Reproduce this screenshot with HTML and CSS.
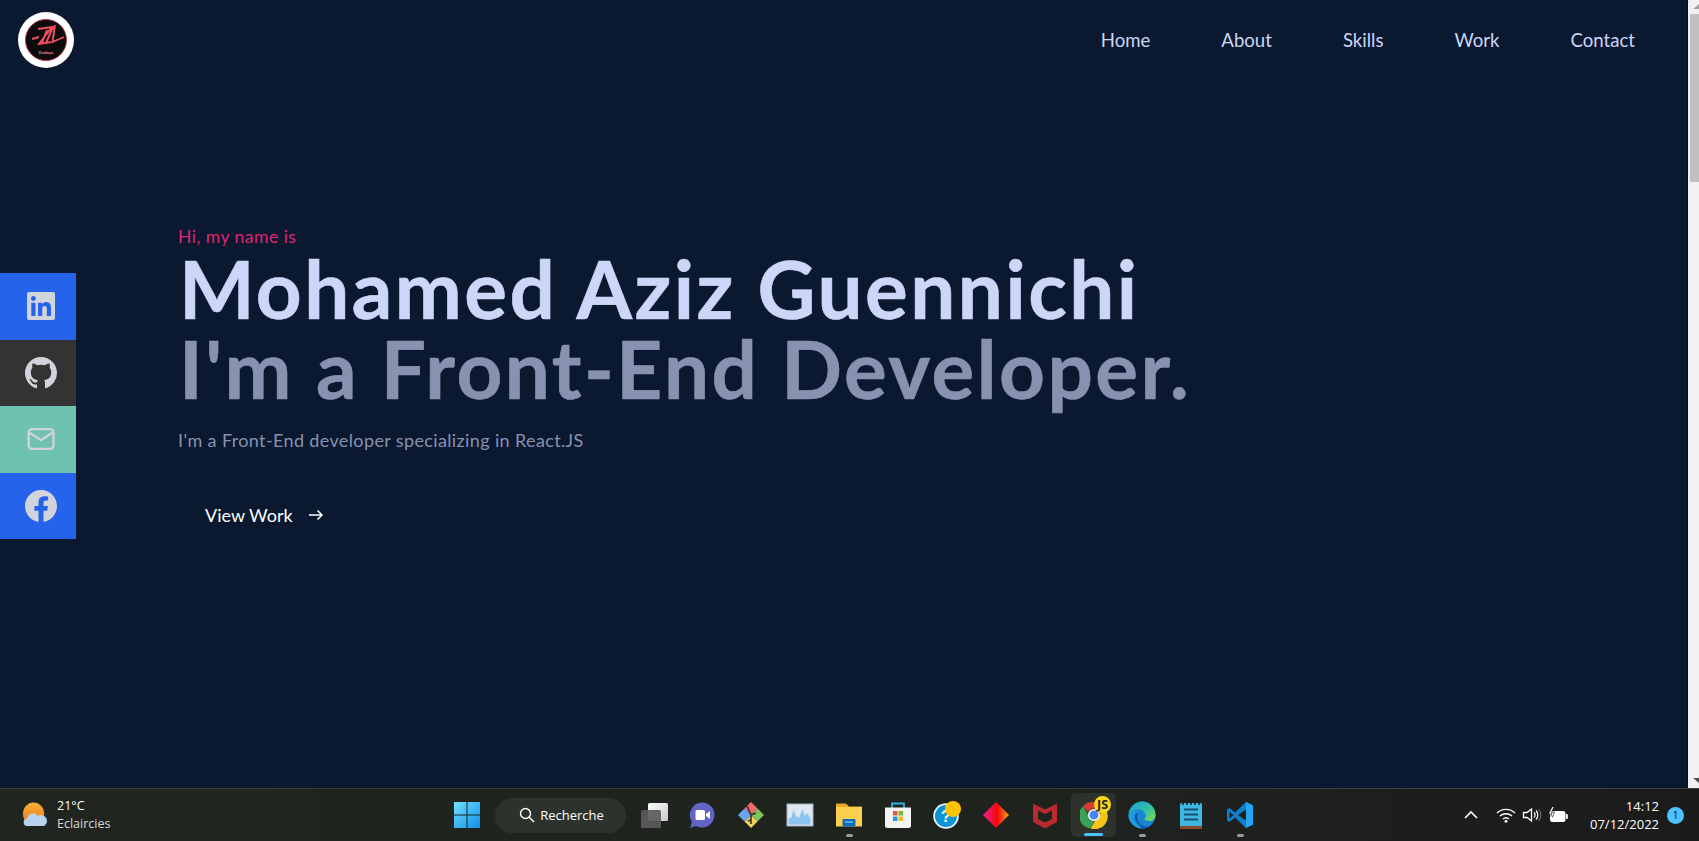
FILE: index.html
```html
<!DOCTYPE html>
<html lang="en">
<head>
<meta charset="utf-8">
<title>Mohamed Aziz Guennichi</title>
<link rel="stylesheet" href="styles.css">
</head>
<body>
<div class="screen">
  <div class="page">
    <nav class="nav">
      <svg class="logo" viewBox="0 0 56 56">
        <circle cx="28" cy="28" r="28" fill="#fff"/>
        <circle cx="28" cy="28" r="20.500" fill="#0b0b0d" stroke="#b5333f" stroke-width="1"/>
        <path d="M20 17L34 15 21 32 27 31M29 18L24 31M35 15L28 31 33 30M37 13L34.500 30 46 25M14 27L21 25" fill="none" stroke="#f0505f" stroke-width="1.900"/>
        <text x="28" y="42" class="logo-text">Dodaya</text>
      </svg>
      <ul class="menu">
        <li>Home</li>
        <li>About</li>
        <li>Skills</li>
        <li>Work</li>
        <li>Contact</li>
      </ul>
    </nav>
    <section class="hero">
      <p class="hi">Hi, my name is</p>
      <h1 class="name">Mohamed Aziz Guennichi</h1>
      <h2 class="role">I'm a Front-End Developer.</h2>
      <p class="desc">I'm a Front-End developer specializing in React.JS</p>
      <div class="cta">
        <span>View Work</span>
        <svg class="arrow" viewBox="0 0 16 16"><path d="M1 8h13M9.500 3.500L14 8l-4.500 4.500" fill="none" stroke="#fff" stroke-width="1.500"/></svg>
      </div>
    </section>
    <aside class="social">
      <div class="soc blue"><svg class="soc-icon" viewBox="0 0 448 512"><path d="M416 32H31.900C14.300 32 0 46.500 0 64.300v383.400C0 465.500 14.300 480 31.900 480H416c17.600 0 32-14.500 32-32.300V64.300c0-17.800-14.400-32.300-32-32.300zM135.400 416H69V202.200h66.500V416zm-33.200-243c-21.300 0-38.500-17.300-38.500-38.500S80.900 96 102.200 96c21.200 0 38.500 17.300 38.500 38.500 0 21.300-17.200 38.500-38.500 38.500zm282.100 243h-66.400V312c0-24.800-.5-56.700-34.500-56.700-34.600 0-39.900 27-39.900 54.900V416h-66.400V202.200h63.700v29.200h.9c8.900-16.800 30.600-38.500 62.900-38.500 67.200 0 79.700 44.300 79.700 101.900V416z"/></svg></div>
      <div class="soc dark"><svg class="soc-icon" viewBox="0 0 16 16"><path d="M8 0C3.580 0 0 3.580 0 8c0 3.540 2.290 6.530 5.470 7.590.4.07.55-.17.55-.38 0-.19-.01-.82-.01-1.490-2.010.37-2.530-.49-2.690-.94-.09-.23-.48-.94-.82-1.130-.28-.15-.68-.52-.01-.53.63-.01 1.080.58 1.230.82.72 1.210 1.870.87 2.330.66.07-.52.28-.87.51-1.070-1.780-.2-3.640-.89-3.640-3.950 0-.87.31-1.590.82-2.150-.08-.2-.36-1.020.08-2.120 0 0 .67-.21 2.200.82.64-.18 1.320-.27 2-.27.68 0 1.360.09 2 .27 1.530-1.040 2.200-.82 2.200-.82.44 1.100.16 1.920.08 2.120.51.56.82 1.270.82 2.150 0 3.070-1.870 3.750-3.650 3.950.29.25.54.73.54 1.480 0 1.070-.01 1.930-.01 2.200 0 .21.15.46.55.38A8.013 8.013 0 0016 8c0-4.420-3.580-8-8-8z"/></svg></div>
      <div class="soc teal"><svg class="soc-icon" viewBox="0 0 28 28"><rect x="3.200" y="5.300" width="21.700" height="17.400" rx="3" fill="none" stroke="currentColor" stroke-width="2"/><path d="M4 8.500l10 6.500 10-6.500" fill="none" stroke="currentColor" stroke-width="2"/></svg></div>
      <div class="soc blue"><svg class="soc-icon" viewBox="0 0 16 16"><path d="M16 8.049c0-4.446-3.582-8.050-8-8.050C3.580 0-.002 3.603-.002 8.050c0 4.017 2.926 7.347 6.750 7.951v-5.625h-2.030V8.050H6.750V6.275c0-2.017 1.195-3.131 3.022-3.131.876 0 1.791.157 1.791.157v1.980h-1.009c-.993 0-1.303.621-1.303 1.258v1.510h2.218l-.354 2.326H9.250V16c3.824-.604 6.750-3.934 6.750-7.951z"/></svg></div>
    </aside>
  </div>
  <div class="scrollbar">
    <div class="sb-up"></div>
    <div class="sb-thumb"></div>
    <div class="sb-track"></div>
    <div class="sb-down"></div>
  </div>
</div>
<footer class="taskbar">
  <div class="weather">
    <svg class="tb-weather" viewBox="0 0 28 28">
      <defs><linearGradient id="sun" x1="0" y1="0" x2="0" y2="1"><stop offset="0" stop-color="#fbb03b"/><stop offset="1" stop-color="#e8741a"/></linearGradient></defs>
      <ellipse cx="12" cy="12.500" rx="11" ry="12" fill="url(#sun)"/>
      <path d="M6 25a4 4 0 0 1-.6-8 6 6 0 0 1 11-2.500A5.200 5.200 0 0 1 23 25z" fill="#b9d2ee"/>
    </svg>
    <div class="weather-text"><span class="w1">21°C</span><span class="w2">Eclaircies</span></div>
  </div>
  <div class="center">
    <svg class="win" viewBox="0 0 26 26">
      <defs><linearGradient id="winb" x1="0" y1="0" x2="1" y2="1"><stop offset="0" stop-color="#6fe0ff"/><stop offset="1" stop-color="#0f8fe8"/></linearGradient></defs>
      <path fill="url(#winb)" d="M0 0h12.500v12.500H0zM13.500 0H26v12.500H13.500zM0 13.500h12.500V26H0zM13.500 13.500H26V26H13.500z"/>
    </svg>
    <div class="search">
      <svg class="search-ico" viewBox="0 0 16 16"><circle cx="6.500" cy="6.500" r="5" fill="none" stroke="#fff" stroke-width="1.400"/><path d="M10.200 10.200L15 15" stroke="#fff" stroke-width="1.500"/></svg>
      <span>Recherche</span>
    </div>
    <div class="apps">
      <div class="app"><svg class="ico" viewBox="0 0 28 28"><defs><linearGradient id="tv" x1="0" y1="0" x2="1" y2="1"><stop offset="0" stop-color="#fff"/><stop offset="1" stop-color="#c9c9c9"/></linearGradient></defs><rect x="8" y="2" width="20" height="18" rx="1.500" fill="url(#tv)"/><rect x="1" y="9" width="20" height="18" rx="1.500" fill="#5b5b5b" fill-opacity=".92"/></svg></div>
      <div class="app"><svg class="ico" viewBox="0 0 28 28"><path d="M14 1.500a12.500 12.500 0 1 1-6 23.500L2 27l2-6A12.500 12.500 0 0 1 14 1.500z" fill="#6264c8"/><rect x="7.500" y="9" width="9.500" height="10" rx="1.500" fill="#fff"/><path d="M18 13l4-3v8l-4-3z" fill="#fff"/></svg></div>
      <div class="app"><svg class="ico" viewBox="0 0 28 28"><path d="M14 1l6.500 6.500-6.500 6.500-6.500-6.500z" fill="#f0696e"/><path d="M20.500 7.500L27 14l-6.500 6.500L14 14z" fill="#7cc35a"/><path d="M14 14l6.500 6.500L14 27l-6.500-6.500z" fill="#f3d25c"/><path d="M7.500 7.500L14 14l-6.500 6.500L1 14z" fill="#6aa5f2"/><path d="M10 5l4 9v9M14 14l5-2M14 19l-3 1" fill="none" stroke="#333" stroke-width="1.600"/></svg></div>
      <div class="app"><svg class="ico" viewBox="0 0 28 28"><rect x="1" y="3" width="26" height="22" fill="#dfe7ef" stroke="#9fb0c0"/><path d="M2.500 23.500V18l3-2 2-7 2.500 6 3 2 3.500-9 2.500 7 2-3 3.500 5v6.500z" fill="#8cc6ee"/></svg></div>
      <div class="app"><svg class="ico" viewBox="0 0 28 28"><path d="M1 2.500h10l3 3h13v4H1z" fill="#e7a91f"/><rect x="1" y="6" width="26" height="19.500" fill="#fcd04e"/><rect x="7.500" y="18" width="13" height="7.500" rx="1" fill="#0f6cbd"/><rect x="10" y="20.300" width="8" height="1.500" fill="#6fc1f0"/></svg><i class="dot"></i></div>
      <div class="app"><svg class="ico" viewBox="0 0 28 28"><path d="M8 7V2.500h12V7" fill="none" stroke="#2ab4e8" stroke-width="1.800"/><path d="M1 6.500h26v18a2.500 2.500 0 0 1-2.500 2.500h-21A2.500 2.500 0 0 1 1 24.500z" fill="#f4f4f4"/><rect x="9" y="10" width="4.500" height="4.500" fill="#e8533a"/><rect x="14.500" y="10" width="4.500" height="4.500" fill="#7cb82f"/><rect x="9" y="15.500" width="4.500" height="4.500" fill="#1a9ce8"/><rect x="14.500" y="15.500" width="4.500" height="4.500" fill="#f8b81f"/></svg></div>
      <div class="app"><svg class="ico" viewBox="0 0 28 28"><circle cx="13" cy="15" r="12.800" fill="#e9f4fb"/><circle cx="13" cy="15" r="11" fill="#0b95d8"/><text x="13" y="21" class="help-mark">?</text><circle cx="20" cy="8" r="8" fill="#fdc400"/></svg></div>
      <div class="app"><svg class="ico" viewBox="0 0 28 28"><defs><linearGradient id="dia" x1="0" y1="0" x2="1" y2="0"><stop offset="0" stop-color="#f0209a"/><stop offset=".55" stop-color="#f50808"/><stop offset="1" stop-color="#f7a31c"/></linearGradient></defs><path d="M14 1l13 13-13 13L1 14z" fill="url(#dia)"/></svg></div>
      <div class="app"><svg class="ico" viewBox="0 0 28 28"><path d="M2 2.500l12 6 12-6V21l-12 6.500L2 21zM7 9.500v8.500l7 3.500 7-3.500V9.500l-7 3.500z" fill="#b92a2e"/></svg></div>
      <div class="app active"><svg class="ico" viewBox="0 0 28 28"><path d="M14 1a13 13 0 0 1 11.300 6.500H14a6.500 6.500 0 0 0-6 4L3 5.200A13 13 0 0 1 14 1z" fill="#d93a30"/><path d="M3 5.200l5.700 9.800a6.500 6.500 0 0 0 5.300 5.500l-3.400 7A13 13 0 0 1 3 5.200z" fill="#3ba454"/><path d="M25.300 7.500A13 13 0 0 1 10.600 27.500l5.600-9.800A6.500 6.500 0 0 0 19 7.500z" fill="#f5c518"/><circle cx="14" cy="14" r="5.300" fill="#4a86f0" stroke="#fff" stroke-width="1.500"/></svg><span class="js">JS</span><i class="bar"></i></div>
      <div class="app"><svg class="ico" viewBox="0 0 28 28"><defs><linearGradient id="edg" x1="0" y1="0" x2="1" y2="1"><stop offset="0" stop-color="#1a9ede"/><stop offset=".55" stop-color="#35c1a0"/><stop offset="1" stop-color="#86d94c"/></linearGradient></defs><circle cx="14" cy="14" r="13.500" fill="#1787d4"/><path d="M.6 13C2 5.500 8 .5 14 .5 21.500.5 27.500 6.500 27.500 14c0 4-3 6-6 6-2.500 0-5-1-5.500-2 3-1 2.500-8-3.500-9.500C8 7.500 4 9.500.6 13z" fill="url(#edg)"/><path d="M11 9C6 10.500 4.500 16 7 21c2 4 7 6 12 5.500-2 1-3.500 1-5 1C8 27.500 .5 22 .5 14 3 11 6 9.500 11 9z" fill="#1d9fe0"/><path d="M10.500 12c-2.500 3-2 8 2 11.500 3 2.500 8 3.500 12 0-2 2.500-6.500 4-10.500 4C11 24 6.500 19 7 15c.3-1.500 1.500-2.500 3.500-3z" fill="#0b4f9a"/></svg><i class="dot"></i></div>
      <div class="app"><svg class="ico narrow" viewBox="0 0 22 28"><rect x="0" y="2" width="22" height="26" rx="1.500" fill="#3fb7e0"/><rect x="0" y="25" width="22" height="3" fill="#8a4a2c"/><path d="M4 8.500h14M4 13.500h14M4 18.500h14" stroke="#164f73" stroke-width="2"/><path d="M2 3h18" stroke="#163f5f" stroke-width="2.200" stroke-dasharray="2 2"/></svg></div>
      <div class="app"><svg class="ico" viewBox="0 0 28 28"><path d="M20 1l7 3.500v19L20 27 9 16.500 3.500 21 1 19.500V8.500L3.500 7 9 11.500z" fill="#0f7fcc"/><path d="M20 1l7 3.500v19L20 27z" fill="#22a7f0"/><path d="M20 8.500L12 14l8 5.500z" fill="#1e1f1c"/><path d="M3.500 11l4 3-4 3.500z" fill="#1e1f1c"/></svg><i class="dot"></i></div>
    </div>
  </div>
  <div class="tray">
    <svg class="tray-ico chev" viewBox="0 0 14 14"><path d="M1 10l6-6 6 6" fill="none" stroke="#fff" stroke-width="1.700"/></svg>
    <svg class="tray-ico" viewBox="0 0 20 16"><path d="M1 6a13 13 0 0 1 18 0M4 9a9 9 0 0 1 12 0M7 12a4.500 4.500 0 0 1 6 0" fill="none" stroke="#fff" stroke-width="1.400"/><circle cx="10" cy="14.300" r="1.400" fill="#fff"/></svg>
    <svg class="tray-ico" viewBox="0 0 20 16"><path d="M1.500 5.500h3.500L9.500 2v12L5 10.500H1.500z" fill="none" stroke="#fff" stroke-width="1.300"/><path d="M12 5.500a3.500 3.500 0 0 1 0 5M14 3.500a6.500 6.500 0 0 1 0 9" fill="none" stroke="#fff" stroke-width="1.200"/><path d="M16.500 2a9 9 0 0 1 0 12" fill="none" stroke="#777" stroke-width="1"/></svg>
    <svg class="tray-ico" viewBox="0 0 20 16"><rect x="2" y="4" width="15.500" height="11" rx="2.500" fill="#fff"/><rect x="18" y="7" width="1.800" height="5" rx=".7" fill="#fff"/><path d="M5 0L2 6h3L3.500 10" fill="none" stroke="#1f1f1f" stroke-width="2.500"/><path d="M5 0L2 6h3L3.500 10" fill="none" stroke="#fff" stroke-width="1.200"/></svg>
    <div class="clock"><span>14:12</span><span>07/12/2022</span></div>
    <div class="badge">1</div>
  </div>
</footer>
</body>
</html>
```
FILE: styles.css
```css
* { box-sizing: border-box; }
html, body { margin: 0; height: 100%; overflow: hidden; }
body { display: flex; flex-direction: column; background: #0a192f; font-family: "Lato", "Liberation Sans", sans-serif; }
ul, p, h1, h2 { margin: 0; padding: 0; }

.screen { flex: 1; display: flex; min-height: 0; }
.page { flex: 1; position: relative; background: #0a192f; border-right: 1px solid #06101f; }

.nav { height: 80px; display: flex; align-items: center; justify-content: space-between; padding: 0 52px 0 18px; }
.logo { width: 56px; height: 56px; }
.logo-text { font-family: "Liberation Sans", sans-serif; font-size: 4px; font-weight: 700; fill: #f0808a; text-anchor: middle; }
.menu { display: flex; list-style: none; gap: 71px; color: #ccd6f6; font-size: 18.600px; padding-bottom: 1px; }

.hero { padding: 145px 0 0 178px; display: flex; flex-direction: column; }
.hi { color: #db2777; font-size: 17.600px; line-height: 23px; letter-spacing: .45px; }
.name, .role { font-size: 80px; line-height: 80px; font-weight: 700; white-space: nowrap; margin-left: 1px; letter-spacing: 2.450px; -webkit-text-stroke: .6px currentColor; }
.name { color: #ccd6f6; }
.role { color: #8892b0; }
.desc { color: #8892b0; font-size: 18px; line-height: 28px; margin-top: 18px; letter-spacing: .37px; }
.cta { display: flex; align-items: center; gap: 15px; margin: 47px 0 0 27px; color: #fff; font-size: 18px; line-height: 28px; }
.arrow { width: 16px; height: 16px; }

.social { position: absolute; left: 0; top: 273px; width: 75.500px; }
.soc { height: 66.600px; display: flex; align-items: center; justify-content: center; padding-left: 7px; color: #d1d5db; }
.soc-icon { width: 32px; height: 32px; fill: currentColor; }
.blue { background: #2563eb; }
.dark { background: #333; }
.teal { background: #6fc2b0; }

.scrollbar { width: 11px; display: flex; flex-direction: column; background: #f1f1f1; overflow: hidden; }
.sb-up, .sb-down { height: 14px; position: relative; }
.sb-up::after, .sb-down::after { content: ""; position: absolute; left: 5px; border-left: 6px solid transparent; border-right: 6px solid transparent; }
.sb-up::after { top: 4px; border-bottom: 5px solid #a3a3a3; }
.sb-down::after { bottom: 5px; border-top: 5px solid #505050; }
.sb-thumb { height: 168px; margin-left: 2px; background: #c1c1c1; }
.sb-track { flex: 1; }

.taskbar { height: 53px; position: relative; display: flex; align-items: center; background: linear-gradient(90deg, #20251f, #1f231e 60%, #1b1b1b); border-top: 1px solid #3a3f3a; color: #fff; font-family: "Open Sans", "Noto Sans", sans-serif; }
.weather { display: flex; align-items: center; gap: 8px; padding-left: 22px; width: 454px; }
.tb-weather { width: 27px; height: 27px; }
.weather-text { display: flex; flex-direction: column; font-size: 12.500px; line-height: 18px; }
.w2 { color: #d9d9d9; }
.center { display: flex; align-items: center; }
.win { width: 26px; height: 26px; }
.search { width: 131px; height: 35px; margin-left: 15px; display: flex; align-items: center; justify-content: center; gap: 5px; padding-left: 2px; border-radius: 18px; background: #2d322d; font-size: 13px; }
.search-ico { width: 16px; height: 16px; }
.apps { display: flex; margin-left: 5px; }
.app { width: 45px; height: 44px; margin-right: 3.900px; position: relative; display: flex; align-items: center; justify-content: center; border-radius: 5px; }
.ico { width: 28px; height: 28px; }
.narrow { width: 22px; }
.active { background: #2d322d; }
.dot { position: absolute; bottom: 0; left: 19px; width: 7px; height: 3px; border-radius: 2px; background: #9a9a9a; }
.bar { position: absolute; bottom: 1px; left: 13px; width: 19px; height: 3px; border-radius: 2px; background: #4cc2ff; }
.js { position: absolute; top: 3px; right: 5px; width: 17px; height: 17px; border-radius: 50%; background: #fdd915; color: #222; font-size: 12.500px; font-weight: 700; line-height: 17px; text-align: center; }
.help-mark { font-family: "Liberation Sans", sans-serif; font-size: 16px; font-weight: 700; fill: #fff; text-anchor: middle; }

.tray { position: absolute; right: 15px; top: 0; bottom: 0; display: flex; align-items: center; }
.tray-ico { width: 20px; height: 16px; margin-right: 6px; }
.chev { width: 14px; height: 14px; margin-right: 18px; }
.clock { display: flex; flex-direction: column; align-items: flex-end; font-size: 13px; line-height: 18px; margin-left: 16px; }
.badge { width: 17px; height: 17px; margin-left: 8px; border-radius: 50%; background: #4cc2ff; color: #111; font-size: 10px; line-height: 17px; text-align: center; }
```
